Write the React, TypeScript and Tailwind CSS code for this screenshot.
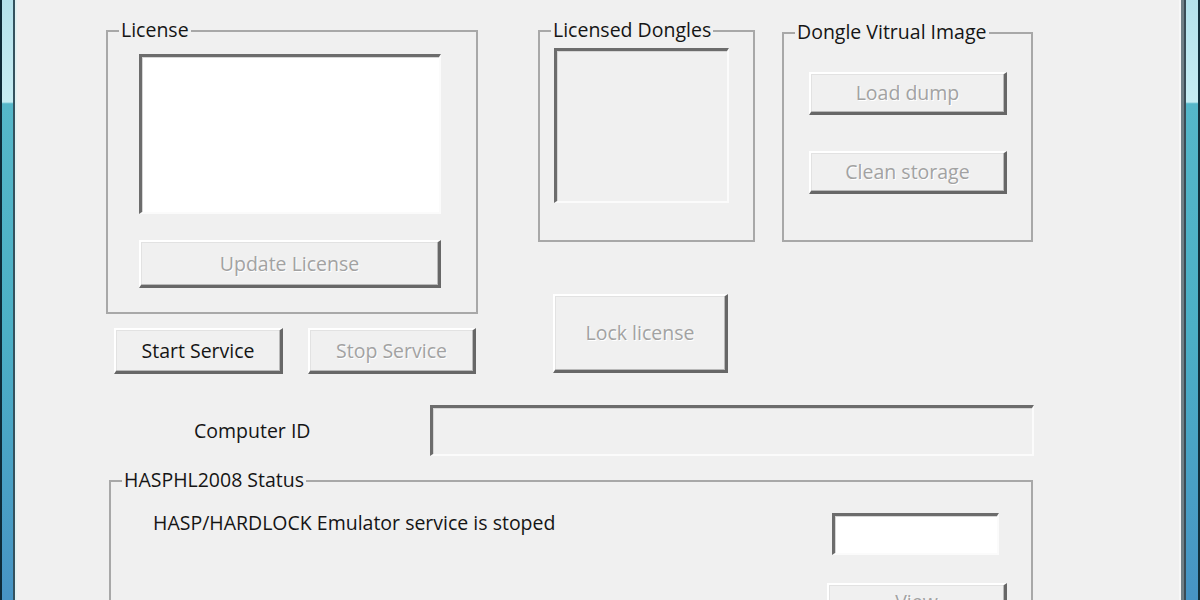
import React from 'react';

const raised =
  'flex items-center justify-center bg-[#f0f0f0] border-t-2 border-l-2 border-t-white border-l-white border-r-[3px] border-b-[3px] border-r-[#676767] border-b-[#676767] shadow-[inset_-1px_-1px_0_#b9b9b9,inset_1px_1px_0_#e2e2e2]';
const sunken =
  'border-t-[3px] border-l-[3px] border-t-[#6c6c6c] border-l-[#6c6c6c] border-r-2 border-b-2 border-r-[#fbfbfb] border-b-[#fbfbfb] shadow-[inset_1px_1px_0_#d6d6d6]';
const greyText = 'text-[#a2a2a2] [text-shadow:1px_1px_0_#ffffff]';
const group = 'flex flex-col border-2 border-[#a8a8a8]';
const caption = '-mt-[14px] ml-[11px] w-fit bg-[#f0f0f0] px-[2px] leading-[24px] text-[#151515]';

const Frame = ({ side }: { side: 'left' | 'right' }) => {
  const blue =
    'w-[11px] bg-[linear-gradient(to_bottom,#b4e2ec_0%,#c6edf3_17%,#55b7c9_17.3%,#4cb0c6_55%,#4794c4_100%)]';
  if (side === 'left') {
    return (
      <div className="flex h-full shrink-0">
        <div className="w-[2px] bg-[#0e2b38]" />
        <div className={blue} />
        <div className="w-[2px] bg-[#34525e]" />
        <div className="w-[2px] bg-[#e4f1f1]" />
      </div>
    );
  }
  return (
    <div className="flex h-full shrink-0">
      <div className="w-[2px] bg-[#f7f7f7]" />
      <div className="w-[3px] bg-[#6f7f86]" />
      <div className="w-[2px] bg-[#3a4c56]" />
      <div className={blue.replace('w-[11px]', 'w-[12px]')} />
      <div className="w-[2px] bg-[#112f3b]" />
    </div>
  );
};

export default function App() {
  return (
    <div className="flex h-[600px] w-[1200px] overflow-hidden bg-[#f0f0f0] font-['Open_Sans',sans-serif] text-[19.5px] text-[#151515]">
      <Frame side="left" />
      <div className="flex-1 pl-[89px]">
        {/* top row: three columns */}
        <div className="flex">
          <div className="mt-[30px] flex w-[372px] flex-col">
            <div className={`${group} pb-[24px]`}>
              <div className={caption}>License</div>
              <div className={`${sunken} ml-[31px] mt-[12px] h-[160px] w-[302px] bg-white`} />
              <div className={`${raised} ${greyText} ml-[31px] mt-[26px] h-[48px] w-[302px]`}>Update License</div>
            </div>
            <div className="mt-[14px] flex gap-[25px] pl-[8px]">
              <div className={`${raised} h-[46px] w-[169px]`}>Start Service</div>
              <div className={`${raised} ${greyText} h-[46px] w-[168px]`}>Stop Service</div>
            </div>
          </div>

          <div className="ml-[60px] mt-[30px] flex w-[217px] flex-col">
            <div className={`${group} h-[212px]`}>
              <div className={caption}>Licensed Dongles</div>
              <div className={`${sunken} ml-[14px] mt-[6px] h-[155px] w-[175px]`} />
            </div>
            <div className={`${raised} ${greyText} ml-[15px] mt-[52px] h-[79px] w-[175px]`}>Lock license</div>
          </div>

          <div className="ml-[27px] mt-[32px] w-[251px]">
            <div className={`${group} h-[210px]`}>
              <div className={caption}>Dongle Vitrual Image</div>
              <div className={`${raised} ${greyText} ml-[25px] mt-[28px] h-[43px] w-[198px]`}>Load dump</div>
              <div className={`${raised} ${greyText} ml-[25px] mt-[36px] h-[43px] w-[198px]`}>Clean storage</div>
            </div>
          </div>
        </div>

        {/* computer id */}
        <div className="mt-[31px] flex items-center">
          <div className="ml-[88px] w-[236px] leading-[24px]">Computer ID</div>
          <div className={`${sunken} h-[51px] w-[604px]`} />
        </div>

        {/* status */}
        <div className="ml-[3px] mt-[24px] flex h-[200px] w-[924px] flex-col border-2 border-b-0 border-[#a8a8a8]">
          <div className={caption}>HASPHL2008 Status</div>
          <div className="flex justify-between">
            <div className="ml-[42px] mt-[19px] leading-[24px]">HASP/HARDLOCK Emulator service is stoped</div>
            <div className="mr-[24px] mt-[21px] flex w-[180px] flex-col">
              <div className={`${sunken} ml-[5px] h-[42px] w-[167px] bg-white`} />
              <div className={`${raised} ${greyText} mt-[28px] h-[45px] w-[180px] items-start pt-[2px]`}>View</div>
            </div>
          </div>
        </div>
      </div>
      <Frame side="right" />
    </div>
  );
}
